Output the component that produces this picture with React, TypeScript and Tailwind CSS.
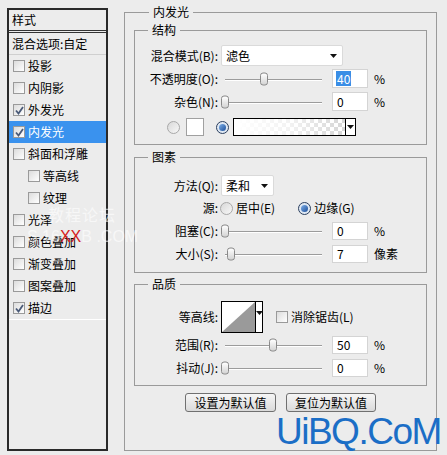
import React from 'react'

const font = { fontFamily: '"Noto Sans CJK SC", "Noto Sans", sans-serif' }

function Check({ checked }: { checked?: boolean }) {
  return (
    <span className="w-[12px] h-[12px] border border-[#9a9a9a] bg-gradient-to-br from-[#dcdcdc] to-[#ffffff] flex items-center justify-center shrink-0">
      {checked && (
        <svg width="9" height="9" viewBox="0 0 9 9">
          <path d="M1 4.5 L3.5 7.5 L8 1" stroke="#4a5a78" strokeWidth="1.8" fill="none" />
        </svg>
      )}
    </span>
  )
}

function Radio({ on }: { on?: boolean }) {
  return (
    <span
      className={`w-[13px] h-[13px] rounded-full border flex items-center justify-center shrink-0 ${
        on ? 'border-[#2b3f5e] bg-[#dfe8f3]' : 'border-[#a8a8a8] bg-gradient-to-br from-[#d8d8d8] to-[#f8f8f8]'
      }`}
    >
      {on && <span className="w-[7px] h-[7px] rounded-full bg-gradient-to-br from-[#7fb0e8] to-[#1d4f9a]" />}
    </span>
  )
}

function Arrow() {
  return (
    <svg width="7" height="4" viewBox="0 0 7 4">
      <path d="M0 0 H7 L3.5 4 Z" fill="#111" />
    </svg>
  )
}

function Label({ children }: { children: React.ReactNode }) {
  return <span className="w-[84px] text-right pr-[1px] shrink-0">{children}</span>
}

function Slider({ thumb }: { thumb: number }) {
  return (
    <div className="relative w-[111px] h-full shrink-0">
      <div className="absolute left-[4px] top-1/2 w-[97px] h-[2px] border-t border-[#9c9c9c] border-b border-b-white" />
      <div
        className="absolute top-1/2 -translate-y-1/2 w-[8px] h-[13px] rounded-[3px] border border-[#8a8a8a] bg-gradient-to-b from-white to-[#d4d4d4]"
        style={{ left: thumb }}
      />
    </div>
  )
}

function NumBox({ value, selected }: { value: string; selected?: boolean }) {
  return (
    <div className="w-[36px] h-full bg-white border border-[#d4d4d4] flex items-center pl-[3px] shrink-0">
      <span className={selected ? 'bg-[#3a8ee6] text-white px-[1px] leading-[15px]' : 'px-[1px]'}>{value}</span>
    </div>
  )
}

function SliderRow({ label, thumb, value, unit, selected, cls }: { label: string; thumb: number; value: string; unit: string; selected?: boolean; cls: string }) {
  return (
    <div className={`flex items-center ${cls}`}>
      <Label>{label}</Label>
      <span className="ml-[2px] h-full flex">
        <Slider thumb={thumb} />
      </span>
      <NumBox value={value} selected={selected} />
      <span className="ml-[6px]">{unit}</span>
    </div>
  )
}

const leftItems = [
  { name: '投影', checked: false },
  { name: '内阴影', checked: false },
  { name: '外发光', checked: true },
  { name: '内发光', checked: true, active: true },
  { name: '斜面和浮雕', checked: false },
  { name: '等高线', checked: false, sub: true },
  { name: '纹理', checked: false, sub: true },
  { name: '光泽', checked: false },
  { name: '颜色叠加', checked: false },
  { name: '渐变叠加', checked: false },
  { name: '图案叠加', checked: false },
  { name: '描边', checked: true, last: true },
]

export default function App() {
  return (
    <div className="relative w-[447px] h-[455px] bg-[#ececec] text-[12px] text-black flex overflow-hidden" style={font}>
      {/* left style list */}
      <div className="mt-2 ml-[7px] w-[101px] h-[443px] border-2 border-[#2a2a2a] flex flex-col shrink-0">
        <div className="h-[23px] border-b-[3px] border-double border-[#333] pl-[3px] flex items-center">样式</div>
        <div className="h-[22px] border-b border-[#cfcfcf] pl-[3px] flex items-center">混合选项:自定</div>
        {leftItems.map((it) => (
          <div
            key={it.name}
            className={`flex items-center gap-[3px] ${it.last ? 'h-[23px] border-b border-white' : 'h-[22px]'} ${
              it.sub ? 'pl-[19px]' : 'pl-[4px]'
            } ${it.active ? 'bg-[#3a92ee] text-white' : ''}`}
          >
            <Check checked={it.checked} />
            <span>{it.name}</span>
          </div>
        ))}
      </div>

      {/* right panel */}
      <fieldset className="ml-4 mt-[5px] w-[313px] h-[446px] border border-[#9a9a9a] px-[9px] flex flex-col">
        <legend className="ml-[15px] px-1 leading-[14px]">内发光</legend>

        <fieldset className="mt-[4px] border border-[#9a9a9a] pb-[8px]">
          <legend className="ml-[13px] px-1 leading-[14px]">结构</legend>
          <div className="mt-[8px] h-[21px] flex items-center">
            <Label>混合模式(B):</Label>
            <div className="ml-[2px] w-[122px] h-full bg-white border border-[#dadada] rounded-[2px] flex items-center justify-between pl-[4px] pr-[5px]">
              <span>滤色</span>
              <Arrow />
            </div>
          </div>
          <SliderRow label="不透明度(O):" thumb={39} value="40" unit="%" selected cls="mt-[3px] h-[19px]" />
          <SliderRow label="杂色(N):" thumb={0} value="0" unit="%" cls="mt-[4px] h-[19px]" />
          <div className="mt-[7px] h-[18px] flex items-center pl-[32px]">
            <Radio />
            <span className="ml-[6px] w-[18px] h-[18px] bg-white border border-[#a0a0a0]" />
            <span className="ml-[12px]">
              <Radio on />
            </span>
            <div className="ml-[4px] w-[123px] h-[18px] border border-black flex bg-white">
              <div className="flex-1 bg-[repeating-conic-gradient(#d6d6d6_0_25%,#ffffff_0_50%)] bg-[length:8px_8px]">
                <div className="w-full h-full bg-gradient-to-r from-white via-white/70 to-white/0" />
              </div>
              <div className="w-[10px] border-l border-black flex items-center justify-center bg-white">
                <Arrow />
              </div>
            </div>
          </div>
        </fieldset>

        <fieldset className="mt-[5px] border border-[#9a9a9a] pb-[9px]">
          <legend className="ml-[13px] px-1 leading-[14px]">图素</legend>
          <div className="mt-[11px] h-[21px] flex items-center">
            <Label>方法(Q):</Label>
            <div className="ml-[2px] w-[53px] h-full bg-white border border-[#dadada] rounded-[2px] flex items-center justify-between pl-[4px] pr-[5px]">
              <span>柔和</span>
              <Arrow />
            </div>
          </div>
          <div className="mt-[3px] h-[18px] flex items-center">
            <Label>源:</Label>
            <span className="ml-[1px]">
              <Radio />
            </span>
            <span className="ml-[3px]">居中(E)</span>
            <span className="ml-[23px]">
              <Radio on />
            </span>
            <span className="ml-[3px]">边缘(G)</span>
          </div>
          <SliderRow label="阻塞(C):" thumb={0} value="0" unit="%" cls="mt-[5px] h-[18px]" />
          <SliderRow label="大小(S):" thumb={6} value="7" unit="像素" cls="mt-[5px] h-[18px]" />
        </fieldset>

        <fieldset className="mt-[4px] border border-[#9a9a9a] pb-[8px]">
          <legend className="ml-[13px] px-1 leading-[14px]">品质</legend>
          <div className="mt-[10px] h-[32px] flex items-center">
            <Label>等高线:</Label>
            <div className="ml-[2px] w-[42px] h-full border border-black flex bg-white">
              <svg width="33" height="30" viewBox="0 0 33 30" className="shrink-0">
                <rect width="33" height="30" fill="#fff" />
                <path d="M0 30 L33 0 L33 30 Z" fill="#9a9a9a" />
              </svg>
              <div className="flex-1 border-l border-black flex items-start justify-center pt-[9px]">
                <Arrow />
              </div>
            </div>
            <span className="ml-[13px]">
              <Check />
            </span>
            <span className="ml-[3px]">消除锯齿(L)</span>
          </div>
          <SliderRow label="范围(R):" thumb={48} value="50" unit="%" cls="mt-[3px] h-[18px]" />
          <SliderRow label="抖动(J):" thumb={0} value="0" unit="%" cls="mt-[5px] h-[18px]" />
        </fieldset>

        <div className="mt-[7px] flex justify-center gap-[10px]">
          <button className="w-[91px] h-[19px] border border-[#707070] rounded-[3px] bg-gradient-to-b from-[#f6f6f6] to-[#dadada] leading-[17px]">
            设置为默认值
          </button>
          <button className="w-[90px] h-[19px] border border-[#707070] rounded-[3px] bg-gradient-to-b from-[#f6f6f6] to-[#dadada] leading-[17px]">
            复位为默认值
          </button>
        </div>
      </fieldset>

      {/* watermarks */}
      <div
        className="absolute left-[276px] top-[410px] text-[37px] leading-[44px] tracking-[-1.5px] text-[#1b6ec6]"
        style={{ fontFamily: '"Liberation Sans", Arial, sans-serif' }}
      >
        UiBQ.CoM
      </div>
      <div className="absolute left-[48px] top-[204px] text-[16px] leading-[20px] text-white/60 tracking-[1px]">
        教程论坛
      </div>
      <div
        className="absolute left-[27px] top-[227px] text-[16px] leading-[20px] text-white/60"
        style={{ fontFamily: '"Liberation Sans", Arial, sans-serif' }}
      >
        S.16<span className="text-[#d42020]">XX</span>B .COM
      </div>
    </div>
  )
}
